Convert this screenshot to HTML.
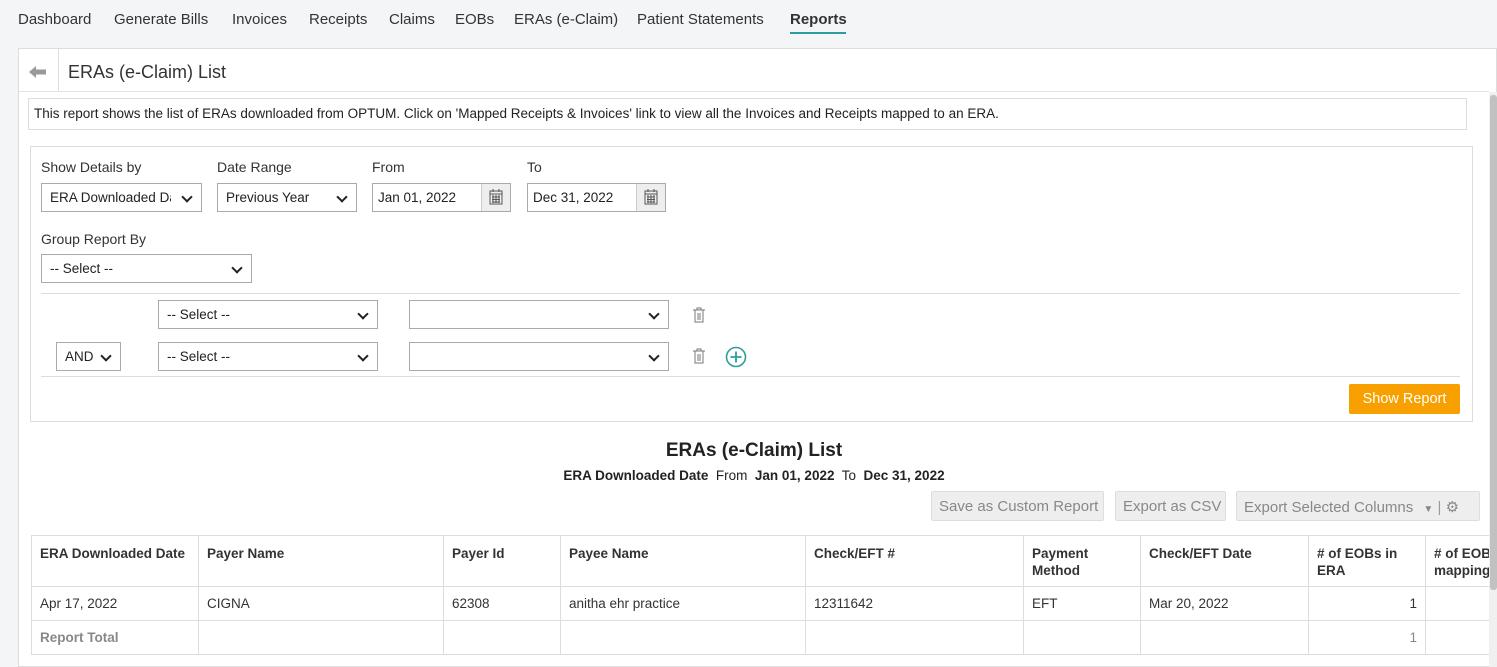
<!DOCTYPE html>
<html><head><meta charset="utf-8"><style>
*{box-sizing:border-box;margin:0;padding:0}
body{width:1497px;height:667px;overflow:hidden;background:#f4f5f6;font-family:"Liberation Sans",sans-serif;color:#333;position:relative;font-size:14px}
.a{position:absolute}
.nav{font-size:15px;color:#333;top:11px}
.sel,.inp{position:absolute;height:29px;border:1px solid #aaa;background:#fff;font-size:13.5px;padding:6px 8px;color:#222;white-space:nowrap;overflow:hidden}
.sel:after{content:"";position:absolute;right:10px;top:9px;width:6px;height:6px;border-right:2px solid #222;border-bottom:2px solid #222;transform:rotate(45deg);background:#fff}
.clip{display:block;overflow:hidden;width:100%}
.lbl{position:absolute;font-size:14px;color:#333}
.cal{position:absolute;right:0;top:0;width:29px;height:27px;background:#eee;border-left:1px solid #ccc}
.btn{position:absolute;height:30px;border:1px solid #ddd;background:#eee;color:#888;font-size:15px;padding:6px 7px;border-radius:2px;white-space:nowrap}
table{position:absolute;left:31px;top:535px;border-collapse:collapse;font-size:13.5px;background:#fff;table-layout:fixed;width:1474px}
td{border:1px solid #ddd;padding:0 8px;vertical-align:top;overflow:hidden}
tr.h td{font-weight:bold;height:51px;padding-top:9px;line-height:17px}
tr.r td{height:34px;vertical-align:middle}
</style></head><body>
<div class="a nav" style="left:18px">Dashboard</div>
<div class="a nav" style="left:114px">Generate Bills</div>
<div class="a nav" style="left:232px">Invoices</div>
<div class="a nav" style="left:309px">Receipts</div>
<div class="a nav" style="left:389px">Claims</div>
<div class="a nav" style="left:455px">EOBs</div>
<div class="a nav" style="left:514px">ERAs (e-Claim)</div>
<div class="a nav" style="left:637px">Patient Statements</div>
<div class="a nav" style="left:790px;font-weight:bold">Reports</div>
<div class="a" style="left:790px;top:32px;width:56px;height:2px;background:#2a9d9f"></div>

<div class="a" style="left:18px;top:48px;width:1479px;height:619px;background:#fff;border:1px solid #ddd"></div>
<div class="a" style="left:58px;top:49px;width:1px;height:43px;background:#ddd"></div>
<div class="a" style="left:19px;top:91px;width:1470px;height:1px;background:#e3e3e3"></div>
<svg class="a" style="left:28px;top:65px" width="20" height="14"><path d="M1 7 L8 1 V4.5 H18 V9.5 H8 V13 Z" fill="#999"/></svg>
<div class="a" style="left:68px;top:62px;font-size:18px;color:#333">ERAs (e-Claim) List</div>
<div class="a" style="left:28px;top:98px;width:1439px;height:32px;border:1px solid #ddd;font-size:13.5px;padding:7px 5px;color:#222">This report shows the list of ERAs downloaded from OPTUM. Click on 'Mapped Receipts &amp; Invoices' link to view all the Invoices and Receipts mapped to an ERA.</div>

<div class="a" style="left:30px;top:146px;width:1443px;height:276px;border:1px solid #ddd"></div>
<div class="lbl" style="left:41px;top:159px">Show Details by</div>
<div class="lbl" style="left:217px;top:159px">Date Range</div>
<div class="lbl" style="left:372px;top:159px">From</div>
<div class="lbl" style="left:527px;top:159px">To</div>
<div class="sel" style="left:41px;top:183px;width:161px;padding-right:30px"><span class="clip">ERA Downloaded Date</span></div>
<div class="sel" style="left:217px;top:183px;width:140px">Previous Year</div>
<div class="inp" style="left:372px;top:183px;width:139px;padding:6px 5px">Jan 01, 2022<div class="cal"><svg width="28" height="27"><rect x="8" y="7" width="12" height="13" fill="none" stroke="#555"/><path d="M8 10H20M10 13H18M10 15.5H18M10 18H18M11 11V19M14 11V19M17 11V19M11 5V8M17 5V8" stroke="#555" stroke-width="1"/></svg></div></div>
<div class="inp" style="left:527px;top:183px;width:139px;padding:6px 5px">Dec 31, 2022<div class="cal"><svg width="28" height="27"><rect x="8" y="7" width="12" height="13" fill="none" stroke="#555"/><path d="M8 10H20M10 13H18M10 15.5H18M10 18H18M11 11V19M14 11V19M17 11V19M11 5V8M17 5V8" stroke="#555" stroke-width="1"/></svg></div></div>
<div class="lbl" style="left:41px;top:231px">Group Report By</div>
<div class="sel" style="left:41px;top:254px;width:211px">-- Select --</div>
<div class="a" style="left:41px;top:293px;width:1419px;height:1px;background:#ddd"></div>
<div class="sel" style="left:158px;top:300px;width:220px">-- Select --</div>
<div class="sel" style="left:409px;top:300px;width:260px"></div>
<div class="sel" style="left:56px;top:342px;width:65px;padding-right:26px"><span class="clip">AND</span></div>
<div class="sel" style="left:158px;top:342px;width:220px">-- Select --</div>
<div class="sel" style="left:409px;top:342px;width:260px"></div>
<svg class="a" style="left:692px;top:307px" width="14" height="16"><path d="M1 3H13M5 3V1H9V3M3 3V15H11V3M6 6V13M8 6V13" stroke="#777" fill="none"/></svg>
<svg class="a" style="left:692px;top:348px" width="14" height="16"><path d="M1 3H13M5 3V1H9V3M3 3V15H11V3M6 6V13M8 6V13" stroke="#777" fill="none"/></svg>
<svg class="a" style="left:725px;top:346px" width="22" height="22"><circle cx="11" cy="11" r="9.5" stroke="#2a9d9f" stroke-width="1.6" fill="none"/><path d="M11 5.5V16.5M5.5 11H16.5" stroke="#2a9d9f" stroke-width="1.8"/></svg>
<div class="a" style="left:41px;top:376px;width:1419px;height:1px;background:#ddd"></div>
<div class="a" style="left:1349px;top:384px;width:111px;height:30px;background:#f7a000;color:#fff;font-size:14.5px;text-align:center;line-height:30px;border-radius:2px">Show Report</div>

<div class="a" style="left:0;width:1508px;top:440px;text-align:center;font-size:19px;font-weight:bold;color:#222">ERAs (e-Claim) List</div>
<div class="a" style="left:0;width:1508px;top:468px;text-align:center;font-size:13.5px;color:#222"><b>ERA Downloaded Date</b>&nbsp; From&nbsp; <b>Jan 01, 2022</b>&nbsp; To&nbsp; <b>Dec 31, 2022</b></div>
<div class="btn" style="left:931px;top:491px;width:173px">Save as Custom Report</div>
<div class="btn" style="left:1115px;top:491px;width:111px">Export as CSV</div>
<div class="btn" style="left:1236px;top:491px;width:244px">Export Selected Columns <span style="font-size:10px;margin-left:6px">▼</span> <span style="color:#999">|</span> ⚙</div>

<table>
<colgroup><col style="width:167px"><col style="width:245px"><col style="width:117px"><col style="width:245px"><col style="width:218px"><col style="width:117px"><col style="width:168px"><col style="width:117px"><col style="width:80px"></colgroup>
<tr class="h"><td>ERA Downloaded Date</td><td>Payer Name</td><td>Payer Id</td><td>Payee Name</td><td>Check/EFT #</td><td>Payment Method</td><td>Check/EFT Date</td><td># of EOBs in ERA</td><td style="white-space:nowrap"># of EOB<br>mapping</td></tr>
<tr class="r"><td>Apr 17, 2022</td><td>CIGNA</td><td>62308</td><td>anitha ehr practice</td><td>12311642</td><td>EFT</td><td>Mar 20, 2022</td><td style="text-align:right">1</td><td></td></tr>
<tr class="r"><td style="color:#888;font-weight:bold">Report Total</td><td></td><td></td><td></td><td></td><td></td><td></td><td style="text-align:right;color:#888">1</td><td></td></tr>
</table>
<div class="a" style="left:1489px;top:92px;width:8px;height:575px;background:#f0f0f0"></div>
<div class="a" style="left:1490px;top:95px;width:7px;height:495px;background:#c1c1c1;border-radius:3px"></div>
</body></html>
